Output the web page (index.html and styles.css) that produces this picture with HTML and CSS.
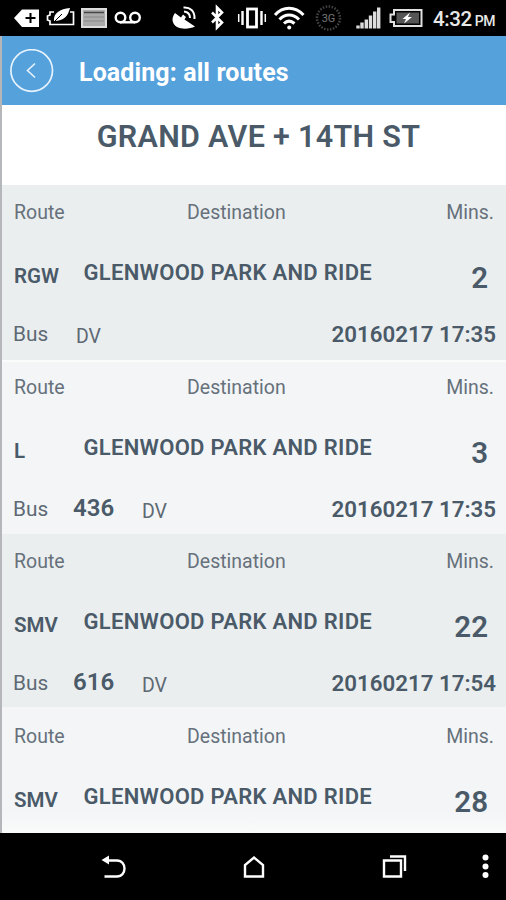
FILE: index.html
```
<!DOCTYPE html>
<html lang="en">
<head>
  <meta charset="UTF-8" />
  <meta name="viewport" content="width=device-width, initial-scale=1.0"/>
  <title>Arrivals</title>
  <link rel="stylesheet" href="styles.css">
</head>
<body>

<div class="status-bar">
  <svg class="status-icons" width="430" height="36" viewBox="0 0 430 36" fill="none" stroke="#fff">
    <!-- input tag -->
    <path d="M14 18L22 9.500H39V27H22Z" fill="#fff" stroke="none"/>
    <path d="M30.500 13v10M25.500 18h10" stroke="#000" stroke-width="2"/>
    <!-- battery saver leaf -->
    <path d="M54 12H50V15L47.500 16V20L50 21V24.500H73.500V12H70" stroke-width="1.700"/>
    <path d="M54 21C53 13 60 9 70 8C68 16 64 21 54 21Z" fill="#fff" stroke="none"/>
    <path d="M53 23L62 14" stroke="#000" stroke-width="1"/>
    <!-- keyboard -->
    <rect x="82" y="9" width="24" height="18" fill="#aaa" stroke="#ddd" stroke-width="2"/>
    <path d="M84 12.500h20" stroke="#444" stroke-width="1.500"/>
    <path d="M84 17h20M84 21h20" stroke="#888"/>
    <!-- voicemail -->
    <circle cx="120.500" cy="17.500" r="4.800" stroke-width="2.400"/>
    <circle cx="135" cy="17.500" r="4.800" stroke-width="2.400"/>
    <path d="M120 22.300h15" stroke-width="2.400"/>
    <!-- gps dish -->
    <path d="M175 13C171 18 172 24 177 27C182 29.500 190 29 195 26.500L184.500 19.500L186 17L183 14.500L181 17.500Z" fill="#fff" stroke="none"/>
    <path d="M184 11.500C188 12 190 14.500 190 18M183.500 7.500C190 7 195 11 194.500 19" stroke-width="2"/>
    <!-- bluetooth -->
    <path d="M212 12.500L222 22.500L217 27.500V7.500L222 12.500L212 22.500" stroke-width="2.600"/>
    <!-- vibrate -->
    <rect x="247.500" y="9" width="9" height="18" stroke-width="2.800"/>
    <path d="M242.500 11v14M261.500 11v14" stroke-width="2.400"/>
    <path d="M238.700 14v8M265.300 14v8" stroke-width="1.500"/>
    <!-- wifi -->
    <path d="M275 15C283 6 295 6 303.500 15M279.500 19.500C285 13.500 293 13.500 299 19.500M284 23.500C287 20.500 291 20.500 294.500 23.500" stroke-width="3"/>
    <circle cx="289.200" cy="27.500" r="2" fill="#fff" stroke="none"/>
    <!-- 3G -->
    <circle cx="328.500" cy="18" r="11.500" stroke="#444" stroke-width="2.500" stroke-dasharray="1.500 1.500"/>
    <text class="network" x="328.500" y="22" text-anchor="middle">3G</text>
    <!-- signal -->
    <path d="M358 28.500v-3M362 28.500v-6M366.300 28.500v-9M370.500 28.500v-13M374.700 28.500v-17M378.700 28.500v-21" stroke="#ddd" stroke-width="3.400"/>
    <!-- battery -->
    <path d="M394 10H421.500V26H394V22H390.500V14.500H394Z" stroke="#e0e0e0" stroke-width="2"/>
    <path d="M396.500 12.500h22.500v11h-22.500z" fill="#555" stroke="none"/>
    <path d="M410 12.500L402.500 19H406L404 23.500L412 17H408Z" fill="#fff" stroke="none"/>
  </svg>
  <span class="clock">4:32<small>PM</small></span>
</div>

<div class="app">
  <div class="header">
    <svg class="back" width="44" height="44" viewBox="0 0 44 44" fill="none" stroke="#e6f3fd">
      <circle cx="21.700" cy="21.500" r="20.800" stroke-width="1.700"/>
      <path d="M25 14.500L17.500 21.500L25 28.500" stroke-width="1.600"/>
    </svg>
    <h1>Loading: all routes</h1>
  </div>

  <h2 class="stop">GRAND AVE + 14TH ST</h2>

  <div class="list">
    <div class="row">
      <div class="labels"><span>Route</span><span>Destination</span><span>Mins.</span></div>
      <div class="values"><b class="route">RGW</b><b class="dest">GLENWOOD PARK AND RIDE</b><b class="mins">2</b></div>
      <div class="info"><span class="bus">Bus</span><span class="dv">DV</span><b class="date">20160217 17:35</b></div>
    </div>
    <div class="row alt">
      <div class="labels"><span>Route</span><span>Destination</span><span>Mins.</span></div>
      <div class="values"><b class="route">L</b><b class="dest">GLENWOOD PARK AND RIDE</b><b class="mins">3</b></div>
      <div class="info"><span class="bus">Bus</span><b class="number">436</b><span class="dv">DV</span><b class="date">20160217 17:35</b></div>
    </div>
    <div class="row">
      <div class="labels"><span>Route</span><span>Destination</span><span>Mins.</span></div>
      <div class="values"><b class="route">SMV</b><b class="dest">GLENWOOD PARK AND RIDE</b><b class="mins">22</b></div>
      <div class="info"><span class="bus">Bus</span><b class="number">616</b><span class="dv">DV</span><b class="date">20160217 17:54</b></div>
    </div>
    <div class="row alt last">
      <div class="labels"><span>Route</span><span>Destination</span><span>Mins.</span></div>
      <div class="values"><b class="route">SMV</b><b class="dest">GLENWOOD PARK AND RIDE</b><b class="mins">28</b></div>
    </div>
  </div>
</div>

<div class="nav-bar">
  <svg width="506" height="66" viewBox="0 0 506 66" fill="none" stroke="#fff" stroke-width="2.400">
    <path d="M107 26.500H117C127 26.500 127 42.500 117 42.500H104.500"/>
    <path d="M101.500 26L109 21.500V30.500Z" fill="#fff" stroke="none"/>
    <path d="M245 42.500V31L254 23.500L263 31V42.500Z"/>
    <path d="M384 26.500H401V42.500H384Z"/>
    <path d="M390 22.500H405V37"/>
    <g fill="#fff" stroke="none">
      <circle cx="485.500" cy="23.500" r="3"/>
      <circle cx="485.500" cy="32.500" r="3"/>
      <circle cx="485.500" cy="41" r="3"/>
    </g>
  </svg>
</div>

</body>
</html>
```

FILE: styles.css
```
* {
  box-sizing: border-box;
}

body {
  margin: 0;
  width: 506px;
  height: 900px;
  display: flex;
  flex-direction: column;
  overflow: hidden;
  background: #000;
  color: #4a5a68;
  font-family: Roboto, sans-serif;
}

b {
  font-weight: 600;
}

.status-bar {
  height: 36px;
  display: flex;
  background: #000;
  color: #e8e8e8;
}

.status-icons {
  flex: none;
}

.network {
  fill: #777;
  stroke: none;
  font-size: 11px;
}

.clock {
  padding-left: 3px;
  font-size: 20.500px;
  font-weight: 500;
  line-height: 39px;
  letter-spacing: -0.4px;
  white-space: nowrap;
}

.clock small {
  margin-left: 3px;
  font-size: 14px;
}

.app {
  height: 797px;
  border-left: 2px solid #b4b6b9;
  background: #fff;
  overflow: hidden;
}

.header {
  height: 69px;
  display: flex;
  align-items: center;
  margin-left: -2px;
  padding-left: 10px;
  background: #55a1dc;
  border-left: 2px solid #4c8fc3;
  padding-left: 8px;
  color: #fff;
}

h1 {
  margin: 3px 0 0 25px;
  font-size: 25px;
  font-weight: 700;
  letter-spacing: 0.1px;
}

.stop {
  height: 80px;
  margin: 0;
  padding-left: 9px;
  font-size: 30.500px;
  font-weight: 600;
  letter-spacing: 0.3px;
  line-height: 63px;
  text-align: center;
}

.row {
  height: 174.500px;
  padding: 16px 12px 0 12px;
  background: #ebeeef;
}

.alt {
  background: #f3f5f7;
  border-top: 2px solid #fafbfb;
  padding-top: 14px;
}

.last {
  margin-top: -1.500px;
  padding-top: 17.500px;
  border-top: none;
  background: linear-gradient(#f3f5f7 105px, #fafafa 125px);
}

.labels {
  height: 24px;
  display: grid;
  grid-template-columns: 173px 1fr auto;
  font-size: 19.500px;
  line-height: 24px;
  color: #66717b;
}

.values {
  height: 50px;
  margin-top: 27px;
  display: grid;
  grid-template-columns: 69.500px 1fr auto;
}

.route {
  font-size: 20.500px;
  line-height: 48px;
}

.dest {
  font-size: 22px;
  letter-spacing: 0.3px;
  line-height: 41px;
}

.mins {
  padding-right: 6px;
  font-size: 29.500px;
  line-height: 52px;
}

.info {
  height: 40px;
  margin-top: 12px;
  display: flex;
  line-height: 41px;
  color: #5d6973;
}

.info b {
  color: #4a5a68;
}

.bus {
  width: 63px;
  margin-left: -1px;
  font-size: 20.800px;
}

.info .number {
  width: 69px;
  margin-left: -3px;
  font-size: 24px;
  line-height: 38px;
}

.dv {
  font-size: 19.500px;
  line-height: 45px;
}

.date {
  margin-left: auto;
  margin-right: -2px;
  font-size: 22.300px;
}

.nav-bar {
  height: 67px;
  padding-top: 1px;
  background: #000;
}
```
